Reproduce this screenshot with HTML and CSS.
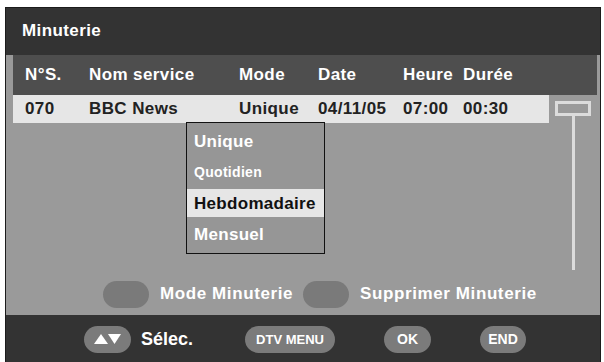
FILE: index.html
```html
<!DOCTYPE html>
<html lang="fr">
<head>
    <meta charset="UTF-8">
    <title>Minuterie</title>
    <link rel="stylesheet" href="styles.css">
</head>
<body>
    <div class="screen">
        <div class="title">Minuterie</div>

        <div class="panel">
            <div class="cols head">
                <span>N°S.</span>
                <span>Nom service</span>
                <span>Mode</span>
                <span>Date</span>
                <span>Heure</span>
                <span>Durée</span>
            </div>

            <div class="list">
                <div class="rows">
                    <div class="cols row">
                        <span>070</span>
                        <span>BBC News</span>
                        <span>Unique</span>
                        <span>04/11/05</span>
                        <span>07:00</span>
                        <span>00:30</span>
                    </div>
                </div>
                <div class="scroll">
                    <div class="thumb"></div>
                    <div class="track"></div>
                </div>
            </div>

            <div class="legend">
                <span class="pill key"></span>
                <span class="legend-text">Mode Minuterie</span>
                <span class="pill key"></span>
                <span class="legend-text">Supprimer Minuterie</span>
            </div>

            <!-- mode menu -->
            <ul class="menu">
                <li>Unique</li>
                <li class="small">Quotidien</li>
                <li class="active">Hebdomadaire</li>
                <li>Mensuel</li>
            </ul>
        </div>

        <div class="footer">
            <span class="btn arrows">
                <svg width="28" height="11" viewBox="0 0 28 11">
                    <polygon points="0,10 7,0 14,10" fill="#fff"/>
                    <polygon points="14,0 27,0 20.5,10" fill="#fff"/>
                </svg>
            </span>
            <span class="footer-text">Sélec.</span>
            <span class="btn menu-btn">DTV MENU</span>
            <span class="btn ok-btn">OK</span>
            <span class="btn end-btn">END</span>
        </div>
    </div>
</body>
</html>
```

FILE: styles.css
```css
body {
    margin: 0;
    background: #fff;
    font-family: "Liberation Sans", Arial, sans-serif;
    font-weight: bold;
}

.screen {
    width: 594px;
    height: 354px;
    margin: 7px 0 0 5px;
    border: 1px solid #1c1c1c;
    border-bottom: none;
    background: #333;
}

.title {
    height: 47px;
    padding-left: 16px;
    line-height: 46px;
    font-size: 17px;
    letter-spacing: 0.4px;
    color: #fff;
    background: #333;
}

.panel {
    position: relative;
    height: 260px;
    padding: 0 3px 0 7px;
    background: #9a9a9a;
}

.cols {
    display: grid;
    grid-template-columns: 64px 150px 79px 85px 60px auto;
    padding-left: 12px;
    font-size: 17px;
    letter-spacing: 0.4px;
}

.head {
    height: 40px;
    align-items: center;
    color: #fff;
    background: #4e4e4e;
}

.list {
    display: flex;
    height: 178px;
}

.rows {
    width: 536px;
}

.row {
    height: 28px;
    align-items: center;
    color: #222;
    background: #e6e6e6;
}

.scroll {
    display: flex;
    flex-direction: column;
    align-items: center;
    width: 48px;
    padding-top: 6px;
}

.thumb {
    width: 30px;
    height: 9px;
    border: 3px solid #dcdcdc;
}

.track {
    width: 3px;
    height: 154px;
    background: #dcdcdc;
}

.legend {
    display: flex;
    align-items: center;
    height: 42px;
    padding-left: 90px;
    font-size: 17px;
    letter-spacing: 0.6px;
    color: #fff;
}

.pill {
    display: inline-block;
    border-radius: 14px;
}

.key {
    width: 46px;
    height: 27px;
    background: #7a7a7a;
}

.legend-text {
    margin: 0 10px 0 11px;
}

.menu {
    position: absolute;
    left: 180px;
    top: 67px;
    width: 137px;
    height: 126px;
    margin: 0;
    padding: 4px 0 0;
    list-style: none;
    border: 1px solid #111;
    background: #969696;
    color: #fff;
    font-size: 17px;
    letter-spacing: 0.3px;
}

.menu li {
    height: 28px;
    margin-bottom: 3px;
    padding-left: 7px;
    line-height: 29px;
}

.menu li.small {
    font-size: 14px;
}

.menu li.active {
    color: #111;
    background: #e6e6e6;
}

.footer {
    display: flex;
    align-items: center;
    height: 47px;
    padding: 1px 0 0 78px;
    box-sizing: border-box;
    color: #fff;
}

.btn {
    display: inline-flex;
    align-items: center;
    justify-content: center;
    height: 27px;
    border-radius: 14px;
    background: #7b7b7b;
    font-size: 13px;
}

.arrows {
    width: 47px;
}

.footer-text {
    margin-left: 10px;
    font-size: 18px;
}

.menu-btn {
    width: 90px;
    margin-left: 52px;
}

.ok-btn {
    width: 47px;
    margin-left: 49px;
    font-size: 14px;
}

.end-btn {
    width: 46px;
    margin-left: 49px;
    font-size: 14px;
}
```
